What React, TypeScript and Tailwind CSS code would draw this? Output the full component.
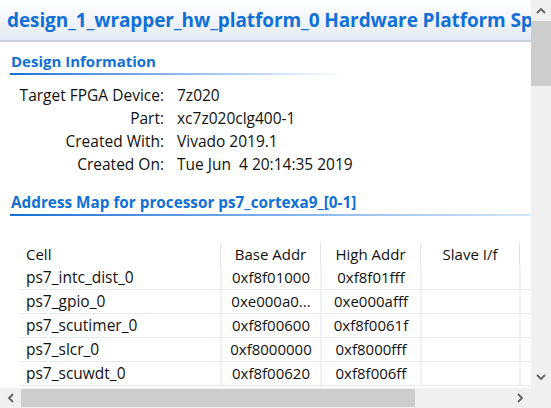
const font = { fontFamily: '"Open Sans", "Noto Sans", sans-serif' };

const info = [
	["Target FPGA Device:", "7z020"],
	["Part:", "xc7z020clg400-1"],
	["Created With:", "Vivado 2019.1"],
	["Created On:", "Tue Jun  4 20:14:35 2019"],
];

const rows = [
	["ps7_intc_dist_0", "0xf8f01000", "0xf8f01fff"],
	["ps7_gpio_0", "0xe000a0...", "0xe000afff"],
	["ps7_scutimer_0", "0xf8f00600", "0xf8f0061f"],
	["ps7_slcr_0", "0xf8000000", "0xf8000fff"],
	["ps7_scuwdt_0", "0xf8f00620", "0xf8f006ff"],
];

const Chevron = ({ dir }: { dir: "up" | "down" | "left" | "right" }) => {
	const d = {
		up: "M2 8 L6 4 L10 8",
		down: "M2 4 L6 8 L10 4",
		left: "M8 2 L4 6 L8 10",
		right: "M4 2 L8 6 L4 10",
	}[dir];
	return (
		<svg width="12" height="12" viewBox="0 0 12 12">
			<path d={d} fill="none" stroke="#606060" strokeWidth="1.8" />
		</svg>
	);
};

const App = () => {
	return (
		<div
			className="w-[551px] h-[408px] overflow-hidden bg-white grid grid-cols-[531px_20px] grid-rows-[388px_20px] text-[#111]"
			style={font}
		>
			<div className="overflow-hidden">
				<div className="h-[42px] bg-gradient-to-b from-white to-[#e4ebf4] border-b-2 border-[#c6d1dd] pl-[7px] flex items-center overflow-hidden">
					<h1 className="text-[19px] font-bold text-[#1170d6] whitespace-nowrap tracking-[-0.1px]">
						design_1_wrapper_hw_platform_0 Hardware Platform Specification
					</h1>
				</div>

				<div className="pl-[10px] mt-[8px]">
					<h2 className="text-[15px] leading-[22px] font-bold text-[#1170d6] pl-px">Design Information</h2>
					<div className="h-[2px] w-[340px] mt-[1px] bg-gradient-to-r from-[#1170d6] to-white" />
				</div>

				<div className="mt-[9px] flex flex-col text-[15.5px] leading-[23px]">
					{info.map(([k, v]) => (
						<div key={k} className="flex">
							<span className="w-[164px] text-right">{k}</span>
							<span className="pl-[13px] whitespace-pre">{v}</span>
						</div>
					))}
				</div>

				<div className="pl-[10px] mt-[15px]">
					<h2 className="text-[15.3px] leading-[22px] font-bold text-[#1170d6] pl-px whitespace-nowrap">
						Address Map for processor ps7_cortexa9_[0-1]
					</h2>
					<div className="h-[2px] mt-[1px] bg-gradient-to-r from-[#1170d6] to-[#d6e7f8]" />
				</div>

				<div className="mt-[26px] pl-[20px] text-[15px]">
					<div className="flex h-[24px] items-center">
						<div className="w-[200px] pl-[6px]">Cell</div>
						<div className="w-[100px] h-full border-l border-[#dfe3e8] flex items-center justify-center">Base Addr</div>
						<div className="w-[100px] h-full border-l border-[#dfe3e8] flex items-center justify-center">High Addr</div>
						<div className="w-[99px] h-full border-l border-[#dfe3e8] flex items-center justify-center">Slave I/f</div>
						<div className="w-[12px] h-full border-l border-[#dfe3e8]" />
					</div>
					{rows.map(([c, b, h]) => (
						<div key={c} className="flex h-[24px] items-center border-b border-[#e6eaf0]">
							<div className="w-[200px] pl-[6px] whitespace-nowrap text-[15.5px]">{c}</div>
							<div className="w-[100px] h-full border-l-2 border-[#eef1f6] flex items-center justify-center">{b}</div>
							<div className="w-[100px] h-full border-l-2 border-[#eef1f6] flex items-center justify-center">{h}</div>
							<div className="w-[99px] h-full border-l-2 border-[#eef1f6]" />
							<div className="w-[12px] h-full border-l-2 border-[#eef1f6]" />
						</div>
					))}
				</div>
			</div>

			<div className="bg-[#f0f0f0] flex flex-col">
				<div className="h-[21px] flex items-center justify-center">
					<Chevron dir="up" />
				</div>
				<div className="h-[65px] bg-[#cdcdcd]" />
				<div className="flex-1" />
				<div className="h-[22px] flex items-center justify-center">
					<Chevron dir="down" />
				</div>
			</div>

			<div className="bg-[#f0f0f0] flex items-stretch">
				<div className="w-[21px] flex items-center justify-center">
					<Chevron dir="left" />
				</div>
				<div className="w-[394px] my-px bg-[#cdcdcd]" />
				<div className="flex-1" />
				<div className="w-[22px] flex items-center justify-center">
					<Chevron dir="right" />
				</div>
			</div>
			<div className="bg-[#f0f0f0]" />
		</div>
	);
};

export default App;
